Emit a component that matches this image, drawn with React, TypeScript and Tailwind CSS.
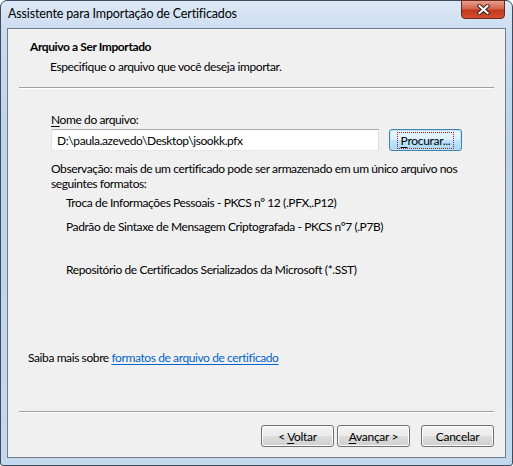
const font = { fontFamily: 'Lato, "Noto Sans", sans-serif' };

function WinButton({ ul, rest, pre = '', focused = false, className = '' }: { ul: string; rest: string; pre?: string; focused?: boolean; className?: string }) {
  return (
    <div
      className={
        'h-[22px] rounded-[3px] border flex items-center justify-center text-[12px] tracking-[-0.3px] text-black ' +
        (focused
          ? 'border-[#3c7fb1] bg-[linear-gradient(#eaf6fd_0%,#d9f0fc_50%,#bee6fd_50%,#a7d9f5_100%)] shadow-[inset_0_0_0_1px_#c3e6f8] '
          : 'border-[#707070] bg-[linear-gradient(#f2f2f2_0%,#ebebeb_50%,#dddddd_50%,#cfcfcf_100%)] shadow-[inset_0_0_0_1px_#fcfcfc] ') +
        className
      }
    >
      <span className={focused ? 'px-[3px] border border-dotted border-[#9a2020] leading-[15px]' : 'leading-[15px]'}>
        {pre}
        <span className="underline underline-offset-2">{ul}</span>
        {rest}
      </span>
    </div>
  );
}

export default function App() {
  return (
    <div style={font} className="w-[513px] h-[466px] bg-white">
      <div className="w-[513px] h-[466px] rounded-t-[7px] rounded-b-[3px] border border-[#3d4b5c] bg-[linear-gradient(180deg,#dbe8f6_0%,#c9dbef_8%,#bcd3ec_30%,#c4d8ee_100%)] flex flex-col">
        {/* title bar */}
        <div className="h-[27px] flex items-start relative">
          <span className="pl-[7px] pt-[5px] text-[12.5px] tracking-[-0.15px] text-black leading-[16px]">Assistente para Importação de Certificados</span>
          <div className="absolute right-[7px] top-[-1px] w-[44px] h-[19px] rounded-b-[4px] border border-[#6b2a20] bg-[linear-gradient(#e8a08e_0%,#d2644c_45%,#c0391f_55%,#d3502f_100%)] flex items-center justify-center">
            <svg width="13" height="11" viewBox="0 0 13 11">
              <path d="M2.5 2 L10.5 9 M10.5 2 L2.5 9" stroke="#3a1810" strokeWidth="4" strokeLinecap="square" />
              <path d="M2.5 2 L10.5 9 M10.5 2 L2.5 9" stroke="#ffffff" strokeWidth="2.2" strokeLinecap="square" />
            </svg>
          </div>
        </div>
        {/* client */}
        <div className="mx-[6px] h-[430px] border border-[#6e7c8e] bg-[#f0f0f0] flex flex-col text-[12px] tracking-[-0.4px] text-black leading-[15px]">
          <div className="px-[11px] pt-[10px]">
            <div className="pl-[11px] font-bold">Arquivo a Ser Importado</div>
            <div className="pl-[31px] pt-[5px]">Especifique o arquivo que você deseja importar.</div>
            <div className="mt-[13px] h-[2px] border-t border-[#a0a0a0] border-b border-b-white" />
          </div>
          <div className="pl-[43px] pr-[43px] pt-[23px]">
            <div><span className="underline underline-offset-2">N</span>ome do arquivo:</div>
            <div className="flex items-center mt-[2px]">
              <div className="w-[328px] h-[22px] border border-[#abadb3] border-b-[#e3e9ef] border-l-[#e2e3ea] border-r-[#dbdfe6] bg-white flex items-center pl-[5px]">
                D:\paula.azevedo\Desktop\jsookk.pfx
              </div>
              <WinButton focused ul="P" rest="rocurar..." className="ml-[10px] w-[73px]" />
            </div>
            <div className="pt-[10px]">
              Observação: mais de um certificado pode ser armazenado em um único arquivo nos seguintes formatos:
            </div>
            <div className="pl-[15px] pt-[4px]">Troca de Informações Pessoais - PKCS nº 12 (.PFX,.P12)</div>
            <div className="pl-[15px] pt-[9px]">Padrão de Sintaxe de Mensagem Criptografada - PKCS nº7 (.P7B)</div>
            <div className="pl-[15px] pt-[28px]">Repositório de Certificados Serializados da Microsoft (*.SST)</div>
          </div>
          <div className="pl-[20px] pt-[73px]">
            Saiba mais sobre <span className="text-[#0066cc] underline underline-offset-2">formatos de arquivo de certificado</span>
          </div>
          <div className="px-[11px] pt-[46px]">
            <div className="h-[2px] border-t border-[#a0a0a0] border-b border-b-white" />
          </div>
          <div className="flex justify-end pr-[11px] pt-[12px]">
            <WinButton pre="< " ul="V" rest="oltar" className="w-[73px]" />
            <WinButton ul="A" rest="vançar >" className="w-[73px] ml-[3px]" />
            <WinButton ul="" rest="Cancelar" className="w-[73px] ml-[11px]" />
          </div>
        </div>
      </div>
    </div>
  );
}
